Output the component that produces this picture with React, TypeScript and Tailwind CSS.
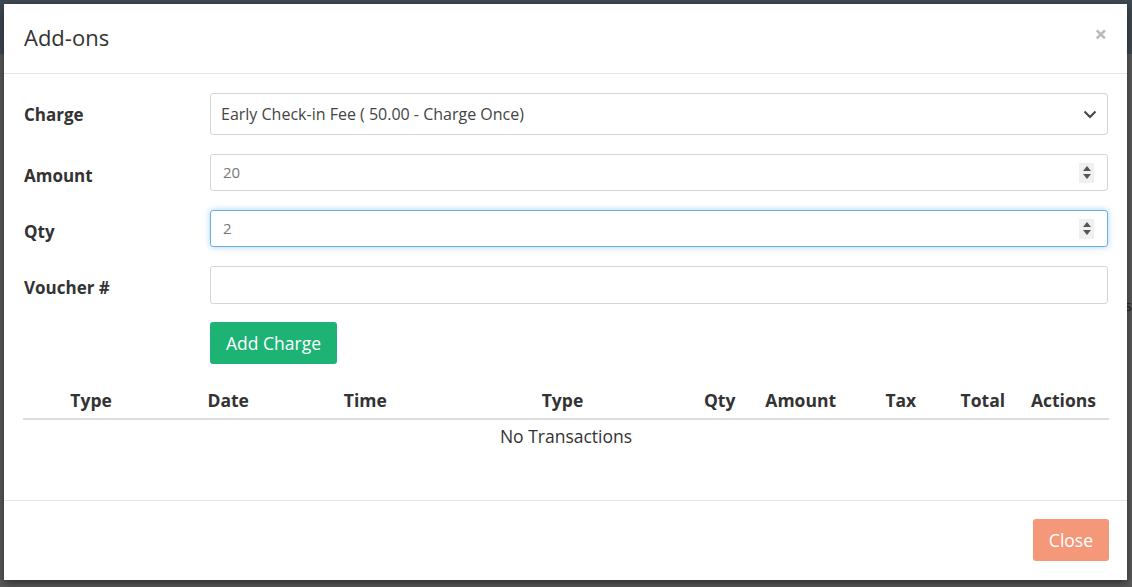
import React from 'react'

const font = { fontFamily: '"Open Sans", "Liberation Sans", sans-serif' }

function Spinner() {
  return (
    <span className="flex h-[20px] w-[15px] flex-col items-center justify-center gap-[3px] bg-[#f0f0f0]">
      <svg width="8" height="5" viewBox="0 0 8 5">
        <path d="M0 5 L4 0 L8 5 Z" fill="#555" />
      </svg>
      <svg width="8" height="5" viewBox="0 0 8 5">
        <path d="M0 0 L4 5 L8 0 Z" fill="#555" />
      </svg>
    </span>
  )
}

function FieldRow({ label, children, select }: { label: string; children: React.ReactNode; select?: boolean }) {
  return (
    <div className="flex items-center">
      <div className={`${select ? 'pt-[2px]' : 'pt-[6px]'} w-[186px] shrink-0 text-[17px] font-bold text-[#333]`}>{label}</div>
      <div className="flex-1">{children}</div>
    </div>
  )
}

function NumberBox({ value, focused }: { value: string; focused?: boolean }) {
  return (
    <div
      className={
        focused
          ? 'flex h-[37px] items-center justify-between rounded-[3px] border border-[#66afe9] pl-[12px] pr-[13px] shadow-[0_0_6px_rgba(102,175,233,0.55)]'
          : 'flex h-[37px] items-center justify-between rounded-[3px] border border-[#d5d5d5] pl-[12px] pr-[13px]'
      }
    >
      <span className="text-[15px] text-[#777]">{value}</span>
      <Spinner />
    </div>
  )
}

const columns = [
  { label: 'Type', w: 'w-[136px]' },
  { label: 'Date', w: 'w-[138px]' },
  { label: 'Time', w: 'w-[136px]' },
  { label: 'Type', w: 'w-[258px]' },
  { label: 'Qty', w: 'w-[56px]' },
  { label: 'Amount', w: 'w-[106px]' },
  { label: 'Tax', w: 'w-[94px]' },
  { label: 'Total', w: 'w-[70px]' },
  { label: 'Actions', w: 'w-[91px]' },
]

export default function App() {
  return (
    <div className="relative h-[587px] w-[1132px] overflow-hidden bg-[#5a5a5a]" style={font}>
      {/* page behind the backdrop */}
      <div className="h-[54px] bg-[#3f4953]" />
      <div className="mt-[240px] flex justify-end text-[15px] text-[#222]">s</div>

      {/* dialog */}
      <div className="absolute left-[4px] top-[4px] flex h-[576px] w-[1123px] flex-col bg-white shadow-[0_3px_9px_rgba(0,0,0,0.5)]">
        <div className="flex h-[70px] shrink-0 items-center justify-between border-b border-[#e5e5e5] pb-[2px] pl-[20px] pr-[20px]">
          <h4 className="text-[22px] font-normal text-[#333]">Add-ons</h4>
          <span className="-mt-[10px] text-[22px] font-bold leading-none text-[#b8b8b8]">×</span>
        </div>

        <div className="flex flex-1 flex-col pl-[20px] pr-[19px] pt-[19px]">
          <FieldRow label="Charge" select>
            <div className="flex h-[42px] items-center justify-between rounded-[3px] border border-[#d5d5d5] pl-[10px] pr-[10px]">
              <span className="text-[16px] text-[#444]">Early Check-in Fee ( 50.00 - Charge Once)</span>
              <svg width="14" height="9" viewBox="0 0 14 9">
                <path d="M1.5 1.5 L7 7 L12.5 1.5" fill="none" stroke="#444" strokeWidth="2" />
              </svg>
            </div>
          </FieldRow>
          <div className="mt-[19px]">
            <FieldRow label="Amount">
              <NumberBox value="20" />
            </FieldRow>
          </div>
          <div className="mt-[19px]">
            <FieldRow label="Qty">
              <NumberBox value="2" focused />
            </FieldRow>
          </div>
          <div className="mt-[19px]">
            <FieldRow label="Voucher #">
              <div className="h-[38px] rounded-[3px] border border-[#d5d5d5]" />
            </FieldRow>
          </div>
          <div className="mt-[18px] pl-[186px]">
            <button className="h-[42px] rounded-[3px] bg-[#1db374] px-[16px] text-[17.5px] text-white">Add Charge</button>
          </div>

          <table className="-ml-[1px] mt-[18px] w-[1086px] table-fixed border-collapse">
            <thead>
              <tr>
                {columns.map((c, i) => (
                  <th key={i} className={`${c.w} border-b-2 border-[#dddddd] pb-[5px] pt-[5px] text-center text-[17.5px] font-bold text-[#333]`}>
                    {c.label}
                  </th>
                ))}
              </tr>
            </thead>
            <tbody>
              <tr>
                <td colSpan={9} className="pt-[3px] text-center text-[17.5px] text-[#333]">
                  No Transactions
                </td>
              </tr>
            </tbody>
          </table>
        </div>

        <div className="flex h-[80px] shrink-0 items-center justify-end border-t border-[#e5e5e5] pb-[1px] pr-[18px]">
          <button className="h-[42px] rounded-[3px] bg-[#f5987a] px-[16px] text-[17.5px] text-white">Close</button>
        </div>
      </div>
    </div>
  )
}
